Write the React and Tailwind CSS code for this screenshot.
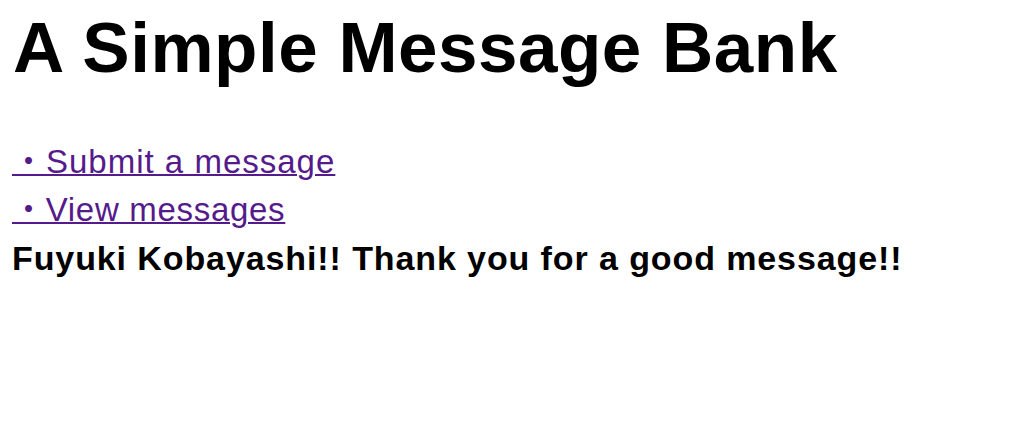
import React from "react";

const font = {
  fontFamily: '"Liberation Sans", Arial, "Noto Sans CJK JP", sans-serif',
};

export default function App() {
  return (
    <div className="min-h-screen bg-white px-3 text-black" style={font}>
      <h1 className="pt-[8px] pl-px text-[71px] font-bold leading-[80px] tracking-[0.5px]">
        A Simple Message Bank
      </h1>

      {/* links */}
      <div className="mt-[50px] flex flex-col text-[33px] leading-[48px] tracking-[1px]">
        <a href="#" className="self-start text-[#551a8b] underline decoration-2">
          ・Submit a message
        </a>
        <a href="#" className="self-start tracking-[0.7px] text-[#551a8b] underline decoration-2">
          ・View messages
        </a>
      </div>

      <p className="text-[34px] font-bold leading-[48px] tracking-[0.9px]">
        Fuyuki Kobayashi!! Thank you for a good message!!
      </p>
    </div>
  );
}
